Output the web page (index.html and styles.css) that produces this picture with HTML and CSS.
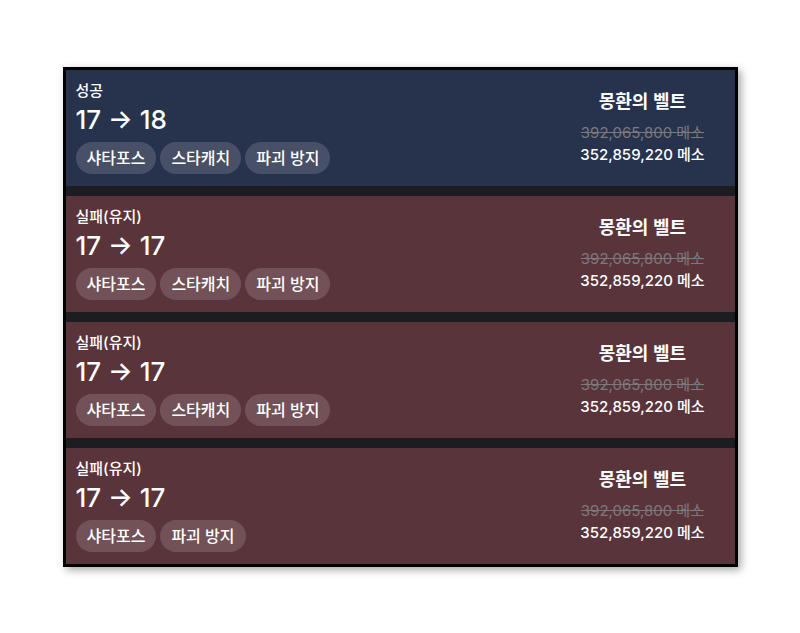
FILE: index.html
```html
<!DOCTYPE html>
<html lang="ko">
<head>
  <meta charset="UTF-8">
  <meta name="viewport" content="width=device-width, initial-scale=1.0">
  <title>starforce log</title>
  <link rel="stylesheet" href="styles.css">
</head>
<body>
  <div class="log-list">
    <div class="log-item success">
      <div class="log-main">
        <div class="log-result">성공</div>
        <div class="log-star">17 → 18</div>
        <div class="log-tags">
          <span class="tag">샤타포스</span>
          <span class="tag">스타캐치</span>
          <span class="tag">파괴 방지</span>
        </div>
      </div>
      <div class="log-side">
        <div class="item-name">몽환의 벨트</div>
        <div class="price-old">392,065,800 메소</div>
        <div class="price">352,859,220 메소</div>
      </div>
    </div>

    <div class="log-item fail">
      <div class="log-main">
        <div class="log-result">실패(유지)</div>
        <div class="log-star">17 → 17</div>
        <div class="log-tags">
          <span class="tag">샤타포스</span>
          <span class="tag">스타캐치</span>
          <span class="tag">파괴 방지</span>
        </div>
      </div>
      <div class="log-side">
        <div class="item-name">몽환의 벨트</div>
        <div class="price-old">392,065,800 메소</div>
        <div class="price">352,859,220 메소</div>
      </div>
    </div>

    <div class="log-item fail">
      <div class="log-main">
        <div class="log-result">실패(유지)</div>
        <div class="log-star">17 → 17</div>
        <div class="log-tags">
          <span class="tag">샤타포스</span>
          <span class="tag">스타캐치</span>
          <span class="tag">파괴 방지</span>
        </div>
      </div>
      <div class="log-side">
        <div class="item-name">몽환의 벨트</div>
        <div class="price-old">392,065,800 메소</div>
        <div class="price">352,859,220 메소</div>
      </div>
    </div>

    <div class="log-item fail">
      <div class="log-main">
        <div class="log-result">실패(유지)</div>
        <div class="log-star">17 → 17</div>
        <div class="log-tags">
          <span class="tag">샤타포스</span>
          <span class="tag">파괴 방지</span>
        </div>
      </div>
      <div class="log-side">
        <div class="item-name">몽환의 벨트</div>
        <div class="price-old">392,065,800 메소</div>
        <div class="price">352,859,220 메소</div>
      </div>
    </div>
  </div>
</body>
</html>
```

FILE: styles.css
```css
body {
  font-family: Inter, "Noto Sans CJK KR", sans-serif;
  margin: 0;
  min-height: 100vh;
  display: flex;
  align-items: center;
  justify-content: center;
  background-color: #fff;
  color: #fff;
}
.log-list {
  width: 669px;
  display: flex;
  flex-direction: column;
  gap: 10px;
  background-color: #1c1d21;
  border: 3px solid #000;
  box-shadow: 3px 3px 8px rgba(0, 0, 0, 0.35);
}
.log-item {
  height: 116px;
  box-sizing: border-box;
  display: flex;
  align-items: center;
  justify-content: space-between;
  padding: 0 30px 0 10px;
}
.log-item.success {
  background-color: #27324d;
}
.log-item.fail {
  background-color: #5a343b;
}
.log-result {
  font-size: 15px;
  line-height: 20px;
  font-weight: 500;
}
.log-star {
  font-size: 26px;
  line-height: 32px;
  font-weight: 500;
  margin-top: 3px;
}
.log-tags {
  display: flex;
  gap: 4px;
  margin-top: 6px;
}
.tag {
  padding: 6px 11px;
  font-size: 16px;
  line-height: 20px;
  font-weight: 500;
  border-radius: 16px;
  background-color: rgba(255, 255, 255, 0.15);
}
.log-side {
  text-align: center;
}
.item-name {
  font-size: 18px;
  line-height: 24px;
  font-weight: 600;
  margin-bottom: 8px;
}
.price-old {
  font-size: 15px;
  line-height: 22px;
  color: #7a7a7e;
  text-decoration: line-through;
}
.price {
  font-size: 15px;
  line-height: 22px;
  font-weight: 500;
}
```
